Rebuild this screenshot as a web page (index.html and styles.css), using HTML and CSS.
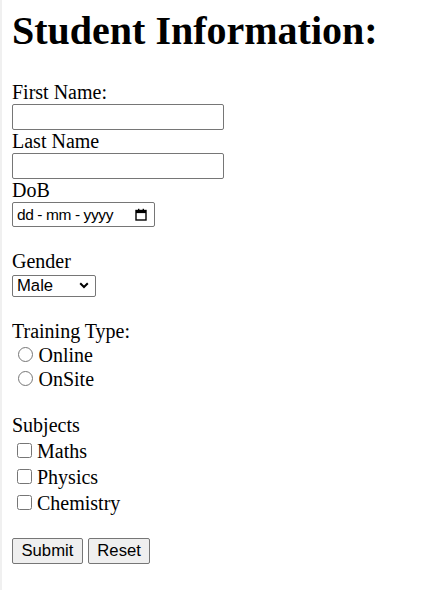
FILE: index.html
```html
<!DOCTYPE html>
<html lang="en">
<head>
<meta charset="utf-8">
<title>Student Information</title>
<link rel="stylesheet" href="styles.css">
</head>
<body>
<h1 class="title">Student Information:</h1>
<form class="form">
First Name:<br>
<input type="text" class="text-field"><br>
Last Name<br>
<input type="text" class="text-field"><br>
DoB<br>
<span class="date-field"><span class="date-text">dd - mm - yyyy</span><svg class="cal" width="12" height="13" viewBox="0 0 12 13"><rect x="1" y="2.5" width="10" height="9.5" fill="none" stroke="#000" stroke-width="1.4"/><rect x="1" y="2.5" width="10" height="2.6" fill="#000"/><rect x="3" y="0.8" width="1.4" height="2" fill="#000"/><rect x="7.6" y="0.8" width="1.4" height="2" fill="#000"/></svg></span><br><br>
Gender<br>
<select class="select-field"><option>Male</option><option>Female</option></select><br><br>
Training Type:<br>
<input type="radio" name="training" class="radio"> Online<br>
<input type="radio" name="training" class="radio"> OnSite<br><br>
Subjects<br>
<input type="checkbox" class="check"> Maths<br>
<input type="checkbox" class="check"> Physics<br>
<input type="checkbox" class="check"> Chemistry<br><br>
<button type="submit" class="btn">Submit</button>
<button type="reset" class="btn">Reset</button>
</form>
</body>
</html>
```

FILE: styles.css
```css
html {
  box-sizing: border-box;
  min-height: 100%;
  background: #fff;
  border-left: 2px solid #f0f0f0;
}
body {
  margin: 7px 10px 10px;
  font-family: "Liberation Serif", "Times New Roman", serif;
  font-size: 20px;
  color: #000;
}
.title {
  font-size: 40px;
  font-weight: bold;
  margin: 0 0 26.8px;
}
.text-field {
  box-sizing: border-box;
  width: 212px;
  height: 26px;
  margin: 0;
  padding: 1px 3px;
  border: 1px solid #767676;
  border-radius: 2px;
  font-family: "Liberation Sans", Arial, sans-serif;
  font-size: 16.67px;
}
.date-field {
  box-sizing: border-box;
  display: inline-flex;
  align-items: center;
  justify-content: space-between;
  width: 143px;
  height: 25px;
  padding: 0 7px 0 4px;
  border: 1px solid #767676;
  border-radius: 2px;
  font-family: "Liberation Sans", Arial, sans-serif;
  font-size: 15.5px;
  color: #000;
}
.date-text {
  letter-spacing: -0.4px;
}
.cal {
  display: block;
}
.select-field {
  box-sizing: border-box;
  appearance: none;
  -webkit-appearance: none;
  width: 84px;
  height: 22px;
  margin: 0;
  padding: 0 0 0 4px;
  border: 1px solid #767676;
  border-radius: 2px;
  background: #fff url("data:image/svg+xml,%3Csvg xmlns='http://www.w3.org/2000/svg' width='10' height='7' viewBox='0 0 10 7'%3E%3Cpolyline points='1.2,1.2 5,5 8.8,1.2' fill='none' stroke='%23000' stroke-width='2'/%3E%3C/svg%3E") no-repeat right 6px center;
  font-family: "Liberation Sans", Arial, sans-serif;
  font-size: 16.67px;
  color: #000;
}
.radio {
  width: 15px;
  height: 15px;
  margin: 4.25px 1px 0 5.5px;
}
.check {
  width: 15px;
  height: 15px;
  margin: 5.75px 0 0 5px;
}
.btn {
  box-sizing: border-box;
  height: 26px;
  margin: 0;
  padding: 1px 8.5px;
  border: 1px solid #767676;
  border-radius: 2px;
  background: #efefef;
  font-family: "Liberation Sans", Arial, sans-serif;
  font-size: 16.67px;
  color: #000;
}
```
